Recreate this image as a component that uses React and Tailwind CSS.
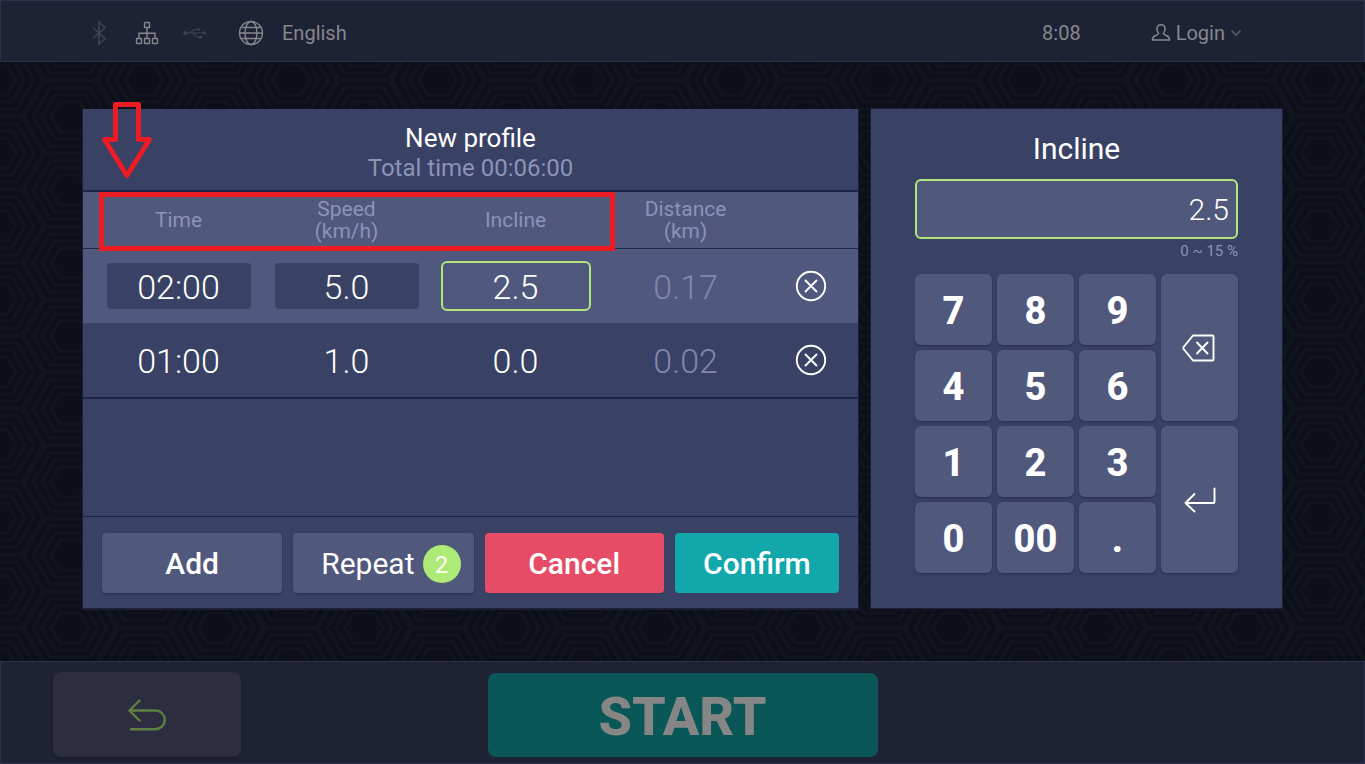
import React, { useState } from "react";

const initialRows = [
  { time: "02:00", speed: "5.0", incline: "2.5", distance: "0.17" },
  { time: "01:00", speed: "1.0", incline: "0.0", distance: "0.02" },
];

const keys = ["7", "8", "9", "back", "4", "5", "6", "1", "2", "3", "enter", "0", "00", "."];

const BluetoothIcon = () => (
  <svg width="24" height="26" viewBox="0 0 24 26" fill="none" stroke="currentColor" strokeWidth="1.6" aria-hidden="true">
    <path d="M6 7.5 18 18.5 12 24V2l6 5.5L6 18.5" />
  </svg>
);

const NetworkIcon = () => (
  <svg width="24" height="24" viewBox="0 0 24 24" fill="none" stroke="currentColor" strokeWidth="1.4" aria-hidden="true">
    <rect x="9.5" y="1.5" width="5" height="5" rx="0.6" />
    <rect x="1.5" y="17.5" width="5" height="5" rx="0.6" />
    <rect x="9.5" y="17.5" width="5" height="5" rx="0.6" />
    <rect x="17.5" y="17.5" width="5" height="5" rx="0.6" />
    <path d="M12 6.5v11M4 17.5v-5.2h16v5.2" />
  </svg>
);

const UsbIcon = () => (
  <svg width="24" height="12" viewBox="0 0 24 12" fill="none" stroke="currentColor" strokeWidth="1.1" aria-hidden="true">
    <circle cx="2.2" cy="6" r="2" fill="currentColor" stroke="none" />
    <path d="M2 6h19M6 6c3 0 3.500-3.500 6-3.500h3M9 6c3 0 3 4 5.500 4h2" />
    <path d="M20.500 3.800 24 6l-3.500 2.200z" fill="currentColor" stroke="none" />
    <circle cx="15.500" cy="2.500" r="1.400" fill="currentColor" stroke="none" />
    <rect x="16" y="8.600" width="3" height="2.800" fill="currentColor" stroke="none" />
  </svg>
);

const GlobeIcon = () => (
  <svg width="26" height="26" viewBox="0 0 26 26" fill="none" stroke="currentColor" strokeWidth="1.4" aria-hidden="true">
    <circle cx="13" cy="13" r="11.500" />
    <ellipse cx="13" cy="13" rx="6" ry="11.500" />
    <path d="M1.500 13h23M3.500 7.500h19M3.500 18.500h19" />
  </svg>
);

const UserIcon = () => (
  <svg width="20" height="20" viewBox="0 0 20 20" fill="none" stroke="currentColor" strokeWidth="1.5" strokeLinejoin="round" aria-hidden="true">
    <path d="M7.600 10.500C6.300 9 5.900 7.500 5.900 5.600 5.900 3.200 7.600 1.700 10 1.700s4.100 1.500 4.100 3.900c0 1.900-.4 3.400-1.700 4.900.2 1.200 1.600 1.500 3 2 2.300.8 3.200 1.700 3.200 4.500H1.400c0-2.800.9-3.700 3.200-4.500 1.400-.5 2.800-.8 3-2z" />
  </svg>
);

const ChevronIcon = () => (
  <svg width="12" height="8" viewBox="0 0 12 8" fill="none" stroke="currentColor" strokeWidth="1.7" aria-hidden="true">
    <path d="M1.500 1.500 6 6l4.500-4.500" />
  </svg>
);

const RemoveIcon = () => (
  <svg width="32" height="32" viewBox="0 0 32 32" fill="none" stroke="currentColor" strokeWidth="1.9" strokeLinecap="round" aria-hidden="true">
    <circle cx="16" cy="16" r="14.200" />
    <path d="m10.500 10.500 11 11M21.500 10.500l-11 11" />
  </svg>
);

const BackspaceIcon = () => (
  <svg width="36" height="28" viewBox="0 0 36 28" fill="none" stroke="currentColor" strokeWidth="1.9" strokeLinecap="round" strokeLinejoin="round" aria-hidden="true">
    <path d="M11 1.500h19.500a1 1 0 0 1 1 1v23a1 1 0 0 1-1 1H11L2 15.500a2 2 0 0 1 0-3z" />
    <path d="m15 8.500 10.500 11M25.500 8.500l-10.500 11" />
  </svg>
);

const EnterIcon = () => (
  <svg width="32" height="26" viewBox="0 0 32 26" fill="none" stroke="currentColor" strokeWidth="1.9" strokeLinecap="round" strokeLinejoin="round" aria-hidden="true">
    <path d="M30.500 1.500V15a1 1 0 0 1-1 1H1.500M10.500 7 1.500 16l9 8.500" />
  </svg>
);

const ReturnIcon = () => (
  <svg width="40" height="32" viewBox="0 0 40 32" fill="none" stroke="currentColor" strokeWidth="2.4" strokeLinecap="round" strokeLinejoin="round" aria-hidden="true">
    <path d="M12.500 1.500 2.500 11.500l10 10M2.500 11.500H28.500a9.200 9.200 0 0 1 0 18.700H4" />
  </svg>
);

/* Nested hexagons, one column shifted by half a tile */
const Hexagon = ({ cx, cy }) => (
  <g transform={`translate(${cx} ${cy})`}>
    <path d="M-46 0-25-36H25L46 0 25 36H-25z" />
    <path d="M-37 0-20-29H20L37 0 20 29H-20z" />
    <path d="M-28 0-15-22H15L28 0 15 22H-15z" />
    <path d="M-19 0-10-15H10L19 0 10 15H-10z" />
  </g>
);

const HexBackground = () => (
  <svg className="absolute inset-0 h-full w-full" aria-hidden="true">
    <defs>
      <pattern id="hex" x="-3" y="-18" width="147" height="73" patternUnits="userSpaceOnUse">
        <g fill="none" stroke="#0f141d" strokeWidth="3">
          <Hexagon cx={0} cy={36} />
          <Hexagon cx={147} cy={36} />
          <Hexagon cx={73} cy={0} />
          <Hexagon cx={73} cy={73} />
        </g>
      </pattern>
    </defs>
    <rect width="100%" height="100%" fill="url(#hex)" />
  </svg>
);

const TopBar = () => (
  <header className="flex h-[62px] items-center justify-between border border-[#2c304a] bg-[#1e2235] pt-[3px] pr-[122px] pl-[86px] text-xl text-[#86878c]">
    <div className="flex items-center gap-6">
      <span className="text-[#3e4254]"><BluetoothIcon /></span>
      <NetworkIcon />
      <span className="text-[#3e4254]"><UsbIcon /></span>
      <button className="ml-[7px] flex items-center gap-[18px]">
        <GlobeIcon />
        English
      </button>
    </div>
    <div className="flex items-center gap-[70px]">
      <span>8:08</span>
      <button className="flex items-center gap-[5px]">
        <UserIcon />
        Login
        <span className="text-[#55596a]"><ChevronIcon /></span>
      </button>
    </div>
  </header>
);

const Highlight = () => (
  <>
    <div className="pointer-events-none absolute top-[83px] right-[243px] left-4 h-[59px] border-5 border-[#ed1c24]" />
    <svg className="pointer-events-none absolute -top-2 left-[18px]" width="52" height="78" viewBox="0 0 52 78" fill="none" stroke="#ed1c24" strokeWidth="5" strokeLinejoin="round" aria-hidden="true">
      <path d="M14.500 3.500h23v35h11L26 74.500 3.500 38.500h11z" />
    </svg>
  </>
);

const fieldClass = "mx-auto block h-[46px] w-36 rounded-sm bg-[#394164] pt-[3px] text-center outline-none";

const ProfileTable = ({ rows, incline, onIncline, onRemove }) => (
  <table className="w-full table-fixed border-collapse text-center">
    <colgroup>
      <col className="w-[179px]" />
      <col className="w-[169px]" />
      <col className="w-[169px]" />
      <col className="w-[171px]" />
      <col className="w-[87px]" />
    </colgroup>
    <thead>
      <tr className="h-[57px] border-t-2 border-b border-[#1f2544] bg-[#50587b] text-[21px] leading-[22px] text-[#8c93b8]">
        <th className="pl-3 font-normal">Time</th>
        <th className="font-normal">Speed<br />(km/h)</th>
        <th className="font-normal">Incline</th>
        <th className="font-normal">Distance<br />(km)</th>
        <th aria-label="Remove" />
      </tr>
    </thead>
    <tbody className="text-[34px] font-light text-white">
      {rows.map((row, i) => (
        <tr key={row.time} className={i === 0 ? "h-[75px] bg-[#50587e]" : "h-[75px] border-b-2 border-[#1f2544]"}>
          <td className={i === 0 ? "pl-3" : "pt-[3px] pl-3"}>
            {i === 0 ? <input aria-label="Time" defaultValue={row.time} className={fieldClass} /> : row.time}
          </td>
          <td className={i === 0 ? "" : "pt-[3px]"}>
            {i === 0 ? <input aria-label="Speed" defaultValue={row.speed} className={fieldClass} /> : row.speed}
          </td>
          <td className={i === 0 ? "" : "pt-[3px]"}>
            {i === 0 ? (
              <input
                aria-label="Incline"
                value={incline}
                onChange={(e) => onIncline(e.target.value)}
                className="mx-auto block h-[50px] w-[150px] rounded-md border-2 border-[#afe67e] pt-[3px] text-center outline-none"
              />
            ) : (
              row.incline
            )}
          </td>
          <td className="pt-[3px] text-[#8087ae]">{row.distance}</td>
          <td className="pr-2">
            <button aria-label="Remove row" className="mx-auto block" onClick={() => onRemove(i)}>
              <RemoveIcon />
            </button>
          </td>
        </tr>
      ))}
    </tbody>
  </table>
);

const ProfilePanel = ({ rows, incline, onIncline, onRemove }) => (
  <section className="relative flex flex-col bg-[#394164] shadow-[0_1px_0_1px_#1b2038]">
    <div className="flex h-[81px] flex-col items-center pt-3">
      <h1 className="text-[26px] leading-[34px] text-white">New profile</h1>
      <p className="text-2xl leading-[26px] text-[#8c93b8]">Total time 00:06:00</p>
    </div>
    <ProfileTable rows={rows} incline={incline} onIncline={onIncline} onRemove={onRemove} />
    <div className="mt-auto grid grid-cols-[180fr_180fr_179fr_164fr] gap-[11px] border-t border-[#1f2544] px-[19px] pt-4 pb-[15px] text-3xl font-medium text-white">
      <button className="h-[60px] rounded-sm bg-[#50587b] pt-[2px] shadow-[0_1px_2px_#2a3050]">Add</button>
      <button className="flex h-[60px] items-center justify-end gap-2 rounded-sm bg-[#50587b] pt-[2px] pr-[13px] font-normal shadow-[0_1px_2px_#2a3050]">
        Repeat
        <span className="flex size-[38px] items-center justify-center rounded-full bg-[#aeea76] pt-[2px] text-2xl">2</span>
      </button>
      <button className="h-[60px] rounded-sm bg-[#e74c66] pt-[2px]">Cancel</button>
      <button className="h-[60px] rounded-sm bg-[#12a8ab] pt-[2px]">Confirm</button>
    </div>
    <Highlight />
  </section>
);

const KeyButton = ({ name, onPress }) => {
  const tall = name === "back" || name === "enter";

  return (
    <button
      onClick={() => onPress(name)}
      aria-label={name}
      className={`flex items-center justify-center rounded-md bg-[#50587b] shadow-[0_1px_2px_#2a3050] ${tall ? "row-span-2" : "pt-1"}`}
    >
      {name === "back" && <BackspaceIcon />}
      {name === "enter" && <EnterIcon />}
      {!tall && name}
    </button>
  );
};

const KeypadPanel = ({ value, onChange, onPress }) => (
  <section className="bg-[#394164] px-11 pt-5 pb-[35px] text-white shadow-[0_0_0_1px_#1b2038]">
    <label htmlFor="incline" className="block text-center text-3xl leading-[40px]">
      Incline
    </label>
    <input
      id="incline"
      value={value}
      onChange={(e) => onChange(e.target.value)}
      className="mt-[10px] block h-[60px] w-full rounded-md border-2 border-[#afe67e] bg-[#50587b] px-[7px] text-right text-3xl font-light outline-none"
    />
    <p className="mt-[2px] text-right text-[15px] leading-5 text-[#8c93b8]">0 ~ 15 %</p>
    <div className="mt-[13px] grid auto-rows-[71px] grid-cols-4 gap-[5px] text-[38px] font-extrabold">
      {keys.map((name) => (
        <KeyButton key={name} name={name} onPress={onPress} />
      ))}
    </div>
  </section>
);

const BottomBar = () => (
  <footer className="grid h-[103px] grid-cols-[1fr_390px_1fr] items-center border border-[#2c304a] bg-[#1e2235] px-[52px] pt-1">
    <button aria-label="Back" className="flex h-[85px] w-[188px] items-center justify-center rounded-lg bg-[#2c2d40] text-[#5f8040] shadow-[0_1px_3px_#161928]">
      <ReturnIcon />
    </button>
    <button className="h-[84px] rounded-lg bg-[#0a5757] pt-1 text-[54px] leading-none font-extrabold text-[#868686]">START</button>
  </footer>
);

const App = () => {
  const [rows, setRows] = useState(initialRows);
  const [incline, setIncline] = useState("2.5");

  const handlePress = (name) => {
    if (name === "enter") return;
    setIncline((v) => (name === "back" ? v.slice(0, -1) : v + name));
  };

  return (
    <div className="flex min-h-screen flex-col bg-[#0c0f1a] font-[Roboto,sans-serif]">
      <TopBar />
      <main className="relative flex-1 px-[83px] pt-[47px] pb-[53px]">
        <HexBackground />
        <div className="relative grid grid-cols-[775fr_411fr] gap-[13px]">
          <ProfilePanel
            rows={rows}
            incline={incline}
            onIncline={setIncline}
            onRemove={(i) => setRows(rows.filter((_, n) => n !== i))}
          />
          <KeypadPanel value={incline} onChange={setIncline} onPress={handlePress} />
        </div>
      </main>
      <BottomBar />
    </div>
  );
};

export default App;
